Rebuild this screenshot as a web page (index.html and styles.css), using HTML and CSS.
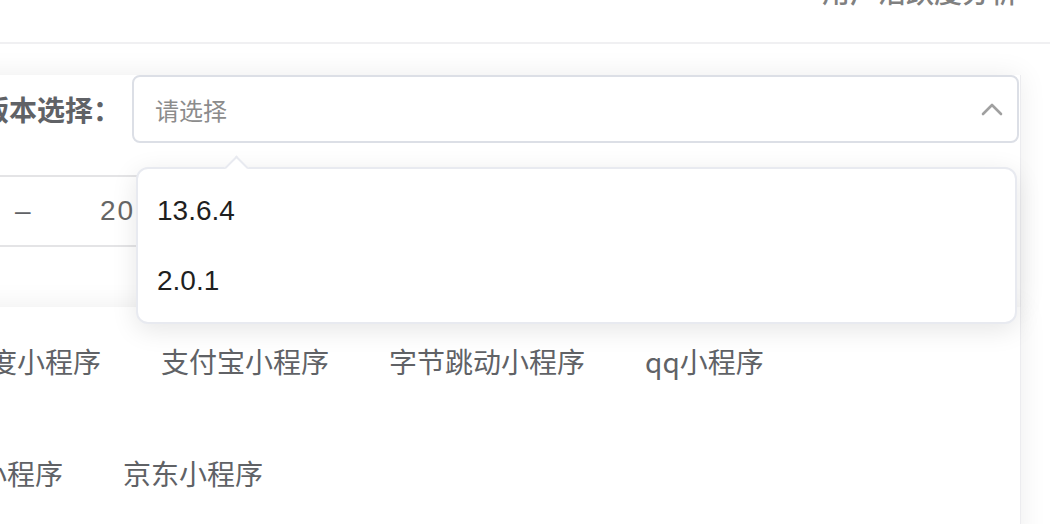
FILE: index.html
```html
<!DOCTYPE html>
<html lang="zh-CN">
<head>
<meta charset="utf-8">
<title>版本选择</title>
<link rel="stylesheet" href="styles.css">
</head>
<body>
<header class="top">
  <h1 class="title">用户活跃度分析</h1>
</header>
<main class="content">
  <section class="card card-form">
    <div class="form-row">
      <label class="form-label">版本选择：</label>
      <div class="select">
        <span class="placeholder">请选择</span>
        <svg class="chevron" width="22" height="14" viewBox="0 0 22 14"><path d="M2 12 L11 3 L20 12" fill="none" stroke="#a0a0a0" stroke-width="2.6" stroke-linecap="round" stroke-linejoin="round"/></svg>
      </div>
    </div>
    <div class="date-row">
      <div class="date-editor">
        <span class="date-sep">–</span>
        <span class="date-input">2021-08-01</span>
      </div>
    </div>
  </section>
  <section class="card card-tabs">
    <div class="tab-row row-1">
      <span class="tab">百度小程序</span>
      <span class="tab">支付宝小程序</span>
      <span class="tab">字节跳动小程序</span>
      <span class="tab">qq小程序</span>
    </div>
    <div class="tab-row row-2">
      <span class="tab">微信小程序</span>
      <span class="tab">京东小程序</span>
    </div>
  </section>
</main>
<div class="popper">
  <span class="popper-arrow"></span>
  <ul class="options">
    <li class="option">13.6.4</li>
    <li class="option">2.0.1</li>
  </ul>
</div>
</body>
</html>
```
FILE: styles.css
```css
* { box-sizing: border-box; }
html, body {
  margin: 0;
  padding: 0;
  width: 1050px;
  height: 524px;
  overflow: hidden;
  background: #ffffff;
  font-family: "Noto Sans CJK SC", "Liberation Sans", sans-serif;
  color: #606266;
}
.top {
  height: 44px;
  border-bottom: 2px solid #f0f0f2;
  display: flex;
  justify-content: flex-end;
  align-items: flex-start;
  padding-right: 32px;
}
.title {
  margin: -23px 0 0 0;
  font-size: 28px;
  line-height: 28px;
  font-weight: 500;
  color: #808080;
}
.content {
  margin-top: 31px;
}
.card {
  position: relative;
  margin-left: -40px;
  width: 1061px;
  background: #fff;
  border-right: 1px solid #ececef;
  box-shadow: 0 0 26px rgba(0, 0, 0, 0.075);
}
.card-form {
  height: 232px;
}
.form-row {
  display: flex;
  align-items: center;
}
.form-label {
  width: 172px;
  padding-right: 11px;
  text-align: right;
  font-size: 28px;
  font-weight: 700;
  color: #606266;
  white-space: nowrap;
  line-height: 40px;
}
.select {
  width: 887px;
  height: 68px;
  border: 2px solid #dcdfe6;
  border-radius: 8px;
  display: flex;
  align-items: center;
  justify-content: space-between;
  padding: 0 14px 0 21px;
}
.placeholder {
  font-size: 24px;
  color: #8c8c8c;
}
.chevron { display: block; }
.date-row {
  margin-top: 32px;
  margin-left: 40px;
}
.date-editor {
  width: 420px;
  height: 72px;
  border-top: 2px solid #e4e4e6;
  border-bottom: 2px solid #e4e4e6;
  display: flex;
  align-items: center;
  padding-left: 15px;
  font-size: 28px;
  color: #666;
}
.date-sep {
  width: 85px;
  font-family: "Liberation Sans", sans-serif;
  color: #606266;
}
.date-input {
  font-family: "Liberation Sans", "Noto Sans CJK SC", sans-serif;
  color: #666;
  letter-spacing: 2px;
}
.card-tabs {
  height: 240px;
  padding-top: 34px;
}
.tab-row {
  display: flex;
  gap: 60px;
  font-size: 28px;
  line-height: 40px;
  color: #606266;
  white-space: nowrap;
}
.row-1 { margin-left: 1px; }
.row-2 { margin-left: -37px; margin-top: 72px; }
.popper {
  position: absolute;
  left: 136px;
  top: 167px;
  width: 881px;
  height: 157px;
  background: #fff;
  border: 2px solid #e8eaf0;
  border-radius: 12px;
  box-shadow: 0 6px 26px rgba(0, 0, 0, 0.1);
}
.popper-arrow {
  position: absolute;
  left: 90px;
  top: -10px;
  width: 17px;
  height: 17px;
  background: #fff;
  border-top: 2px solid #e8eaf0;
  border-left: 2px solid #e8eaf0;
  transform: rotate(45deg);
}
.options {
  list-style: none;
  margin: 0;
  padding: 7px 0;
}
.option {
  height: 70px;
  line-height: 70px;
  padding-left: 19px;
  font-size: 28px;
  color: #1f1f1f;
  font-family: "Liberation Sans", "Noto Sans CJK SC", sans-serif;
}
```
